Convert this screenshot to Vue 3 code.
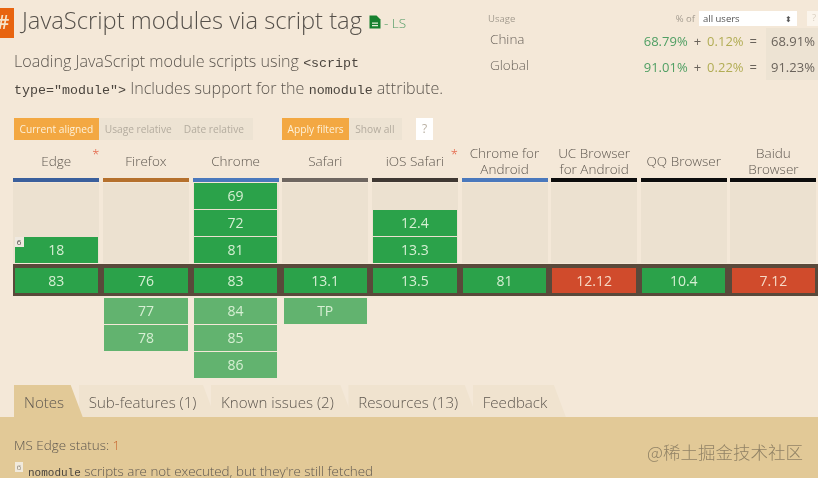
<script setup>
const columns = [
  { name: 'Edge', bar: '#3a5f9c', star: true, past: [{ v: '18', note: '6' }], cur: { v: '83' }, future: [] },
  { name: 'Firefox', bar: '#b5702c', past: [], cur: { v: '76' }, future: ['77', '78'] },
  { name: 'Chrome', bar: '#4a78bc', past: [{ v: '69' }, { v: '72' }, { v: '81' }], cur: { v: '83' }, future: ['84', '85', '86'] },
  { name: 'Safari', bar: '#6e6660', past: [], cur: { v: '13.1' }, future: ['TP'] },
  { name: 'iOS Safari', bar: '#3f3833', star: true, past: [{ v: '12.4' }, { v: '13.3' }], cur: { v: '13.5' }, future: [] },
  { name: 'Chrome for\nAndroid', bar: '#4a78bc', past: [], cur: { v: '81' }, future: [] },
  { name: 'UC Browser\nfor Android', bar: '#0c0c0c', past: [], cur: { v: '12.12', bad: true }, future: [] },
  { name: 'QQ Browser', bar: '#0c0c0c', past: [], cur: { v: '10.4' }, future: [] },
  { name: 'Baidu\nBrowser', bar: '#0c0c0c', past: [], cur: { v: '7.12', bad: true }, future: [] }
]
const usage = [
  { name: 'China', a: '68.79%', b: '0.12%', t: '68.91%' },
  { name: 'Global', a: '91.01%', b: '0.22%', t: '91.23%' }
]
const tabs = ['Notes', 'Sub-features (1)', 'Known issues (2)', 'Resources (13)', 'Feedback']
</script>

<template>
  <div class="page">
    <header class="head">
      <div class="intro">
        <div class="title-row">
          <span class="hash">#</span>
          <h1>JavaScript modules via script tag</h1>
          <svg class="doc" width="12" height="14" viewBox="0 0 12 14">
            <path d="M0.5 0.5H7.5L11.5 4.5V13.5H0.5Z" fill="#17812f" />
            <path d="M3 7.5H9V8.7H3ZM3 10H9V11.2H3Z" fill="#e4efd8" />
          </svg>
          <span class="ls">- LS</span>
        </div>
        <p class="desc">Loading JavaScript module scripts using <code>&lt;script</code> <code>type="module"&gt;</code> Includes support for the <code>nomodule</code> attribute.</p>
      </div>
      <div class="usage">
        <div class="usage-top">
          <span class="usage-label">Usage</span>
          <span class="pct">% of</span>
          <span class="select">all users<span class="arrows">⬍</span></span>
          <span class="q-small">?</span>
        </div>
        <div v-for="u in usage" :key="u.name" class="usage-row">
          <span class="region">{{ u.name }}</span>
          <span class="num-a">{{ u.a }}</span>
          <span class="op">+</span>
          <span class="num-b">{{ u.b }}</span>
          <span class="op">=</span>
          <span class="num-t">{{ u.t }}</span>
        </div>
      </div>
    </header>

    <div class="controls">
      <div class="seg">
        <span class="btn on">Current aligned</span>
        <span class="btn">Usage relative</span>
        <span class="btn">Date relative</span>
      </div>
      <div class="seg seg-filter">
        <span class="btn on">Apply filters</span>
        <span class="btn">Show all</span>
      </div>
      <span class="q">?</span>
    </div>

    <div class="grid names">
      <div v-for="c in columns" :key="c.name" class="name" :style="{ borderColor: c.bar }">
        <span class="label">{{ c.name }}</span>
        <i v-if="c.star" class="star">*</i>
      </div>
    </div>

    <div class="grid past">
      <div v-for="c in columns" :key="c.name" class="past-col">
        <div v-for="p in c.past" :key="p.v" class="cell">
          <b v-if="p.note" class="flag">{{ p.note }}</b>{{ p.v }}
        </div>
      </div>
    </div>

    <div class="grid current">
      <div v-for="c in columns" :key="c.name" class="cell" :class="{ bad: c.cur.bad }">{{ c.cur.v }}</div>
    </div>

    <div class="grid future">
      <div v-for="c in columns" :key="c.name" class="future-col">
        <div v-for="f in c.future" :key="f" class="cell soon">{{ f }}</div>
      </div>
    </div>

    <nav class="tabs">
      <span v-for="(t, i) in tabs" :key="t" class="tab" :class="{ active: i === 0 }">{{ t }}</span>
    </nav>

    <section class="panel">
      <p class="status">MS Edge status: <span>1</span></p>
      <p class="note"><sup>6</sup><code>nomodule</code> scripts are not executed, but they're still fetched</p>
      <span class="mark">@稀土掘金技术社区</span>
    </section>
  </div>
</template>

<style scoped>
.page {
  position: relative;
  width: 818px;
  height: 478px;
  overflow: hidden;
  background: #f4e8d8;
  color: #5f5850;
  font-family: "Open Sans", sans-serif;
  filter: blur(0.4px);
}
.head {
  display: flex;
  justify-content: space-between;
  height: 118px;
}
.intro {
  width: 460px;
  padding-top: 8px;
}
.title-row {
  display: flex;
  align-items: center;
  height: 30px;
}
.hash {
  width: 14px;
  height: 30px;
  margin-right: 8px;
  background: #e8640f;
  color: #f6e4c8;
  font-size: 19px;
  font-weight: 600;
  line-height: 28px;
  text-indent: -3px;
  overflow: hidden;
}
h1 {
  margin: -6px 8px 0 0;
  font-size: 23.7px;
  font-weight: 300;
  white-space: nowrap;
  color: #55504a;
}
.doc {
  margin: -3px 0 0 -1px;
}
.ls {
  margin: 0 0 0 3px;
  font-size: 13.5px;
  font-weight: 300;
  color: #4f9a63;
}
.desc {
  margin: 11px 0 0 14px;
  width: 440px;
  font-size: 16.1px;
  line-height: 25px;
  font-weight: 300;
  color: #5c564f;
}
code {
  font-family: "Liberation Mono", monospace;
  font-size: 13.33px;
  font-weight: 400;
  color: #4b453e;
}
.usage {
  width: 330px;
  padding-top: 11px;
}
.usage-top {
  display: flex;
  align-items: center;
  height: 15px;
  margin-bottom: 2px;
  font-size: 9.5px;
  color: #a49c90;
}
.usage-label {
  flex: 1;
}
.pct {
  margin-right: 4px;
}
.select {
  display: flex;
  justify-content: space-between;
  width: 98px;
  height: 15px;
  padding: 0 5px 0 4px;
  box-sizing: border-box;
  background: #fff;
  color: #555;
  font-size: 9.5px;
  line-height: 15px;
}
.arrows {
  font-size: 8px;
}
.q-small {
  width: 11px;
  height: 15px;
  margin-left: 10px;
  padding-left: 5px;
  box-sizing: border-box;
  background: #fbf5ec;
  color: #d9cfc0;
  overflow: hidden;
}
.usage-row {
  display: flex;
  align-items: center;
  height: 26px;
  font-size: 13px;
  font-weight: 400;
}
.region {
  flex: 1;
  margin-top: -4px;
  padding-left: 2px;
  font-size: 13.5px;
  color: #6a635b;
  font-weight: 300;
}
.num-a {
  color: #4f9f63;
}
.num-b {
  color: #b2ad55;
}
.op {
  margin: 0 6px;
  color: #6a635b;
}
.num-t {
  width: 52px;
  height: 26px;
  margin-left: 3px;
  padding-left: 5px;
  box-sizing: border-box;
  line-height: 26px;
  background: #ede3d3;
  color: #6a635b;
}
.controls {
  display: flex;
  align-items: center;
  height: 22px;
  padding-left: 14px;
  font-size: 10.2px;
}
.seg {
  display: flex;
  background: #ede3d3;
  width: 239px;
  height: 22px;
}
.seg-filter {
  width: 120px;
  margin-left: 29px;
}
.btn {
  padding: 0 6px;
  line-height: 22px;
  color: #b4ac9f;
  white-space: nowrap;
}
.btn.on {
  padding: 0 5.5px;
  background: #f3a842;
  color: #fdf0d8;
}
.q {
  width: 17px;
  height: 22px;
  margin-left: 14px;
  background: #fff;
  color: #b9b0a2;
  font-size: 12px;
  line-height: 22px;
  text-align: center;
}
.grid {
  display: grid;
  grid-template-columns: repeat(9, 86px);
  column-gap: 3.65px;
  padding-left: 13.3px;
}
.names {
  height: 42px;
  align-items: end;
}
.name {
  position: relative;
  display: flex;
  flex-direction: column;
  justify-content: center;
  height: 39px;
  padding-top: 1px;
  box-sizing: border-box;
  border-bottom: 4px solid;
  font-size: 13.5px;
  font-weight: 300;
  text-align: center;
  color: #5f5850;
}
.label {
  line-height: 16px;
  white-space: pre-line;
}
.star {
  position: absolute;
  top: 2px;
  right: 0;
  color: #e2573a;
  font-size: 13px;
  line-height: 18px;
  font-style: normal;
}
.past {
  height: 80px;
  padding-top: 1px;
  padding-bottom: 1px;
}
.past-col {
  display: flex;
  flex-direction: column;
  justify-content: flex-end;
  gap: 1px;
  height: 80px;
  padding: 0 1.3px;
  background: #ece1d0;
}
.cell {
  position: relative;
  height: 26px;
  background: #2ba24a;
  color: #d6efd3;
  font-size: 14px;
  line-height: 26px;
  text-align: center;
}
.flag {
  position: absolute;
  top: 0;
  left: 0;
  width: 9px;
  height: 10px;
  background: #efe9e0;
  color: #4b4a48;
  font-size: 8px;
  font-weight: 400;
  line-height: 10px;
}
.current {
  height: 25px;
  margin-left: 13.3px;
  margin-right: 0.5px;
  padding: 4px 0 3px;
  background: #59493a;
}
.current .cell {
  height: 25px;
  margin: 0 1.3px;
  line-height: 25px;
}
.cell.bad {
  background: #d04b2c;
  color: #f6d9c6;
}
.future {
  height: 87px;
  padding-top: 2px;
}
.future-col {
  display: flex;
  flex-direction: column;
  gap: 1px;
  padding: 0 1.3px;
}
.soon {
  background: #62b36f;
}
.tabs {
  display: flex;
  height: 32px;
  padding-left: 14px;
  font-size: 15.1px;
  font-weight: 300;
  line-height: 34px;
}
.tab {
  margin-right: -4px;
  padding: 0 18.6px 0 10px;
  background: #f0e3cf;
  clip-path: polygon(0 0, calc(100% - 12px) 0, 100% 100%, 0 100%);
  white-space: nowrap;
}
.tab.active {
  position: relative;
  z-index: 1;
  background: #e2c997;
}
.panel {
  position: relative;
  height: 61px;
  padding: 19px 14px 0;
  box-sizing: border-box;
  background: #e2c997;
  font-size: 13.4px;
  font-weight: 300;
  line-height: 18px;
}
.panel p {
  margin: 0;
}
.status span {
  color: #c8662f;
}
.panel .note {
  margin-top: 8px;
  white-space: nowrap;
}
.note sup {
  display: inline-block;
  width: 8px;
  height: 10px;
  margin: 0 5px 0 1px;
  background: #f1eadc;
  font-size: 8px;
  line-height: 10px;
  text-align: center;
  vertical-align: 6px;
}
.note code {
  font-size: 11px;
}
.mark {
  position: absolute;
  top: 24px;
  right: 15px;
  color: rgba(110, 100, 80, 0.7);
  font-family: "Noto Sans CJK SC", sans-serif;
  font-size: 17.5px;
  line-height: 22px;
}
</style>

<style>
html, body {
  margin: 0;
  background: #f4e8d8;
}
</style>
